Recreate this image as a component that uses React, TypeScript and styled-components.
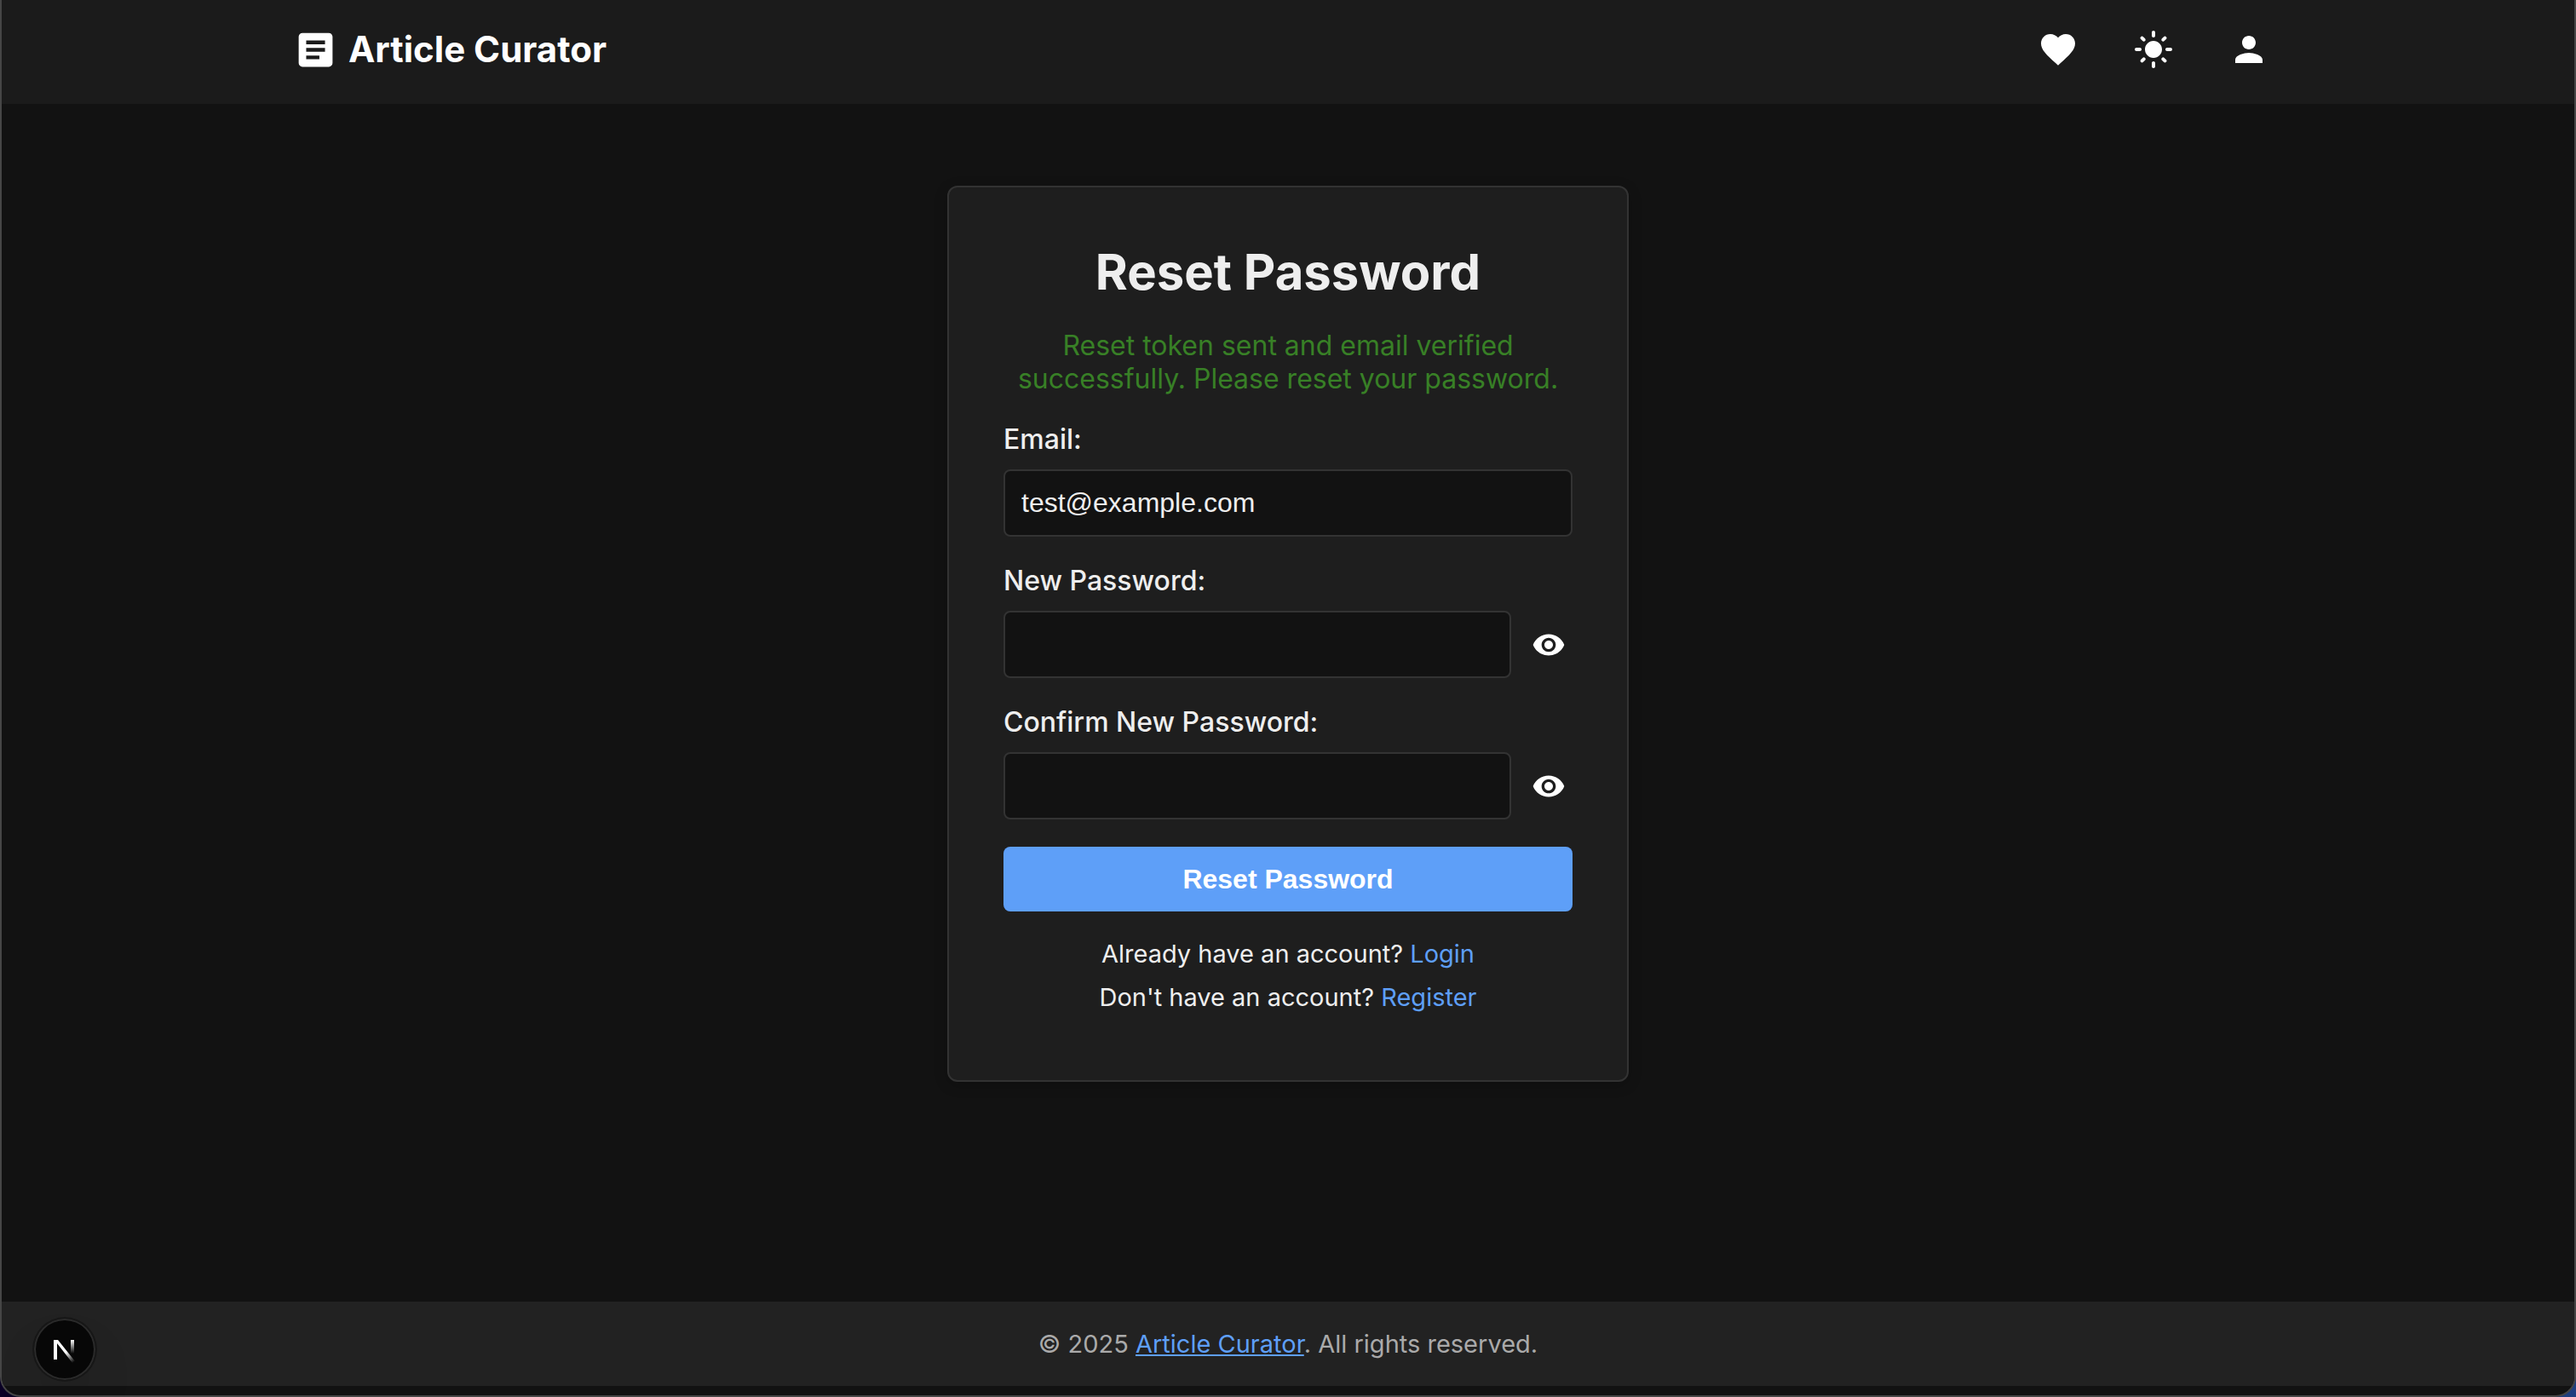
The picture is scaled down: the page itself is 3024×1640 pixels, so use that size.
import React, { useState } from "react";
import styled, { createGlobalStyle } from "styled-components";
import { MdArticle, MdFavorite, MdLightMode, MdPerson, MdVisibility } from "react-icons/md";

const GlobalStyle = createGlobalStyle`
  *, *::before, *::after { box-sizing: border-box; }
  html { background: linear-gradient(90deg, #0a0025 50%, #1f3f7f 50%); }
  body { margin: 0; color: #eeeeee; font-family: Inter, "Liberation Sans", sans-serif; }
`;

const Shell = styled.div`
  display: flex;
  flex-direction: column;
  min-height: 100vh;
  padding-bottom: 11px;
  background: #121212;
  border: 2px solid #464646;
  border-top: 0;
  border-radius: 0 0 24px 24px;
  overflow: hidden;
`;

const Header = styled.header`
  padding: 16px 0 22px;
  background: #1b1b1b;
`;

const HeaderInner = styled.div`
  display: flex;
  align-items: center;
  justify-content: space-between;
  max-width: 2400px;
  min-height: 84px;
  margin: 0 auto;
  padding: 0 32px;
`;

const Brand = styled.a`
  display: flex;
  align-items: center;
  gap: 12px;
  color: #ffffff;
  font-size: 42px;
  font-weight: 700;
  line-height: 50px;
  text-decoration: none;
`;

const Nav = styled.nav`
  display: flex;
  gap: 32px;
`;

const IconButton = styled.button<{ $pad: number }>`
  display: flex;
  padding: ${(p) => p.$pad}px;
  color: #ffffff;
  background: none;
  border: 0;
  cursor: pointer;
`;

const Main = styled.main`
  flex: 1;
  padding: 96px 32px;
`;

const Card = styled.section`
  max-width: 800px;
  margin: 0 auto;
  padding: 64px;
  background: #1e1e1e;
  border: 2px solid #333333;
  border-radius: 12px;
  box-shadow: 0 4px 16px rgba(0, 0, 0, 0.2);
`;

const Title = styled.h1`
  margin: 0 0 32px;
  font-size: 58px;
  font-weight: 700;
  line-height: 70px;
  text-align: center;
`;

const Message = styled.p`
  margin: 0 0 32px;
  color: #388026;
  font-size: 32px;
  line-height: 39px;
  text-align: center;
`;

const Form = styled.form`
  display: flex;
  flex-direction: column;
  gap: 32px;
`;

const Field = styled.div`
  display: flex;
  flex-direction: column;
  gap: 16px;
`;

const Label = styled.label`
  font-size: 32px;
  font-weight: 500;
  line-height: 39px;
`;

const InputRow = styled.div`
  display: flex;
  align-items: center;
  gap: 16px;
`;

const Input = styled.input`
  flex: 1;
  min-width: 0;
  height: 79px;
  padding: 19px;
  color: #eeeeee;
  font-family: "Liberation Sans", Arial, sans-serif;
  font-size: 32px;
  background: #121212;
  border: 2px solid #333333;
  border-radius: 8px;
`;

const Submit = styled.button`
  height: 76px;
  color: #ffffff;
  font-family: "Liberation Sans", Arial, sans-serif;
  font-size: 32px;
  font-weight: 700;
  background: #5e9ff8;
  border: 0;
  border-radius: 8px;
  cursor: pointer;
`;

const Prompts = styled.div`
  padding-top: 32px;
`;

const Prompt = styled.p`
  margin: 0 0 16px;
  font-size: 29px;
  line-height: 35px;
  text-align: center;
`;

const TextLink = styled.a<{ $underlined?: boolean }>`
  color: #5e9ff8;
  text-decoration: ${(p) => (p.$underlined ? "underline" : "none")};
`;

const Footer = styled.footer`
  padding: 32px;
  color: #aaaaaa;
  font-size: 29px;
  line-height: 35px;
  text-align: center;
  background: #222222;
`;

const DevBadge = styled.button`
  position: fixed;
  left: 40px;
  bottom: 20px;
  width: 72px;
  height: 72px;
  padding: 0;
  background: #070707;
  border: 0;
  border-radius: 50%;
  box-shadow: 0 0 0 2px #171717, inset 0 0 0 2px #2b2b2b, 0 32px 64px -16px rgba(0, 0, 0, 0.24);

  svg { display: block; }
`;

function PasswordField({ id, label }: { id: string; label: string }) {
  const [visible, setVisible] = useState(false);
  return (
    <Field>
      <Label htmlFor={id}>{label}</Label>
      <InputRow>
        <Input id={id} type={visible ? "text" : "password"} />
        <IconButton type="button" $pad={8} aria-label="Show password" onClick={() => setVisible(!visible)}>
          <MdVisibility size={40} />
        </IconButton>
      </InputRow>
    </Field>
  );
}

function NextMark() {
  return (
    <svg width="72" height="72" viewBox="0 0 72 72" fill="none" aria-hidden="true">
      <defs>
        <linearGradient id="diagonal" gradientUnits="userSpaceOnUse" x1="38" y1="39" x2="47" y2="51">
          <stop stopColor="#fff" />
          <stop offset="1" stopColor="#fff" stopOpacity="0" />
        </linearGradient>
        <linearGradient id="stem" gradientUnits="userSpaceOnUse" x1="45" y1="25" x2="45" y2="41">
          <stop stopColor="#fff" />
          <stop offset="1" stopColor="#fff" stopOpacity="0" />
        </linearGradient>
      </defs>
      <path d="M23 48V25H28L48 50L45 52L27 29V48Z" fill="url(#diagonal)" />
      <path d="M43 25H47V41H43Z" fill="url(#stem)" />
    </svg>
  );
}

export default function App() {
  return (
    <>
      <GlobalStyle />
      <Shell>
        <Header>
          <HeaderInner>
            <Brand href="#">
              <MdArticle size={53} />
              Article Curator
            </Brand>
            <Nav>
              <IconButton $pad={16} aria-label="Favorites"><MdFavorite size={48} /></IconButton>
              <IconButton $pad={16} aria-label="Toggle theme"><MdLightMode size={48} /></IconButton>
              <IconButton $pad={16} aria-label="Account"><MdPerson size={48} /></IconButton>
            </Nav>
          </HeaderInner>
        </Header>
        <Main>
          <Card>
            <Title>Reset Password</Title>
            <Message>Reset token sent and email verified successfully. Please reset your password.</Message>
            <Form onSubmit={(e) => e.preventDefault()}>
              <Field>
                <Label htmlFor="email">Email:</Label>
                <InputRow>
                  <Input id="email" type="email" defaultValue="test@example.com" />
                </InputRow>
              </Field>
              <PasswordField id="new-password" label="New Password:" />
              <PasswordField id="confirm-password" label="Confirm New Password:" />
              <Submit type="submit">Reset Password</Submit>
            </Form>
            <Prompts>
              <Prompt>Already have an account? <TextLink href="#">Login</TextLink></Prompt>
              <Prompt>Don't have an account? <TextLink href="#">Register</TextLink></Prompt>
            </Prompts>
          </Card>
        </Main>
        <Footer>
          © 2025 <TextLink href="#" $underlined>Article Curator</TextLink>. All rights reserved.
        </Footer>
      </Shell>
      <DevBadge aria-label="Open developer tools"><NextMark /></DevBadge>
    </>
  );
}
